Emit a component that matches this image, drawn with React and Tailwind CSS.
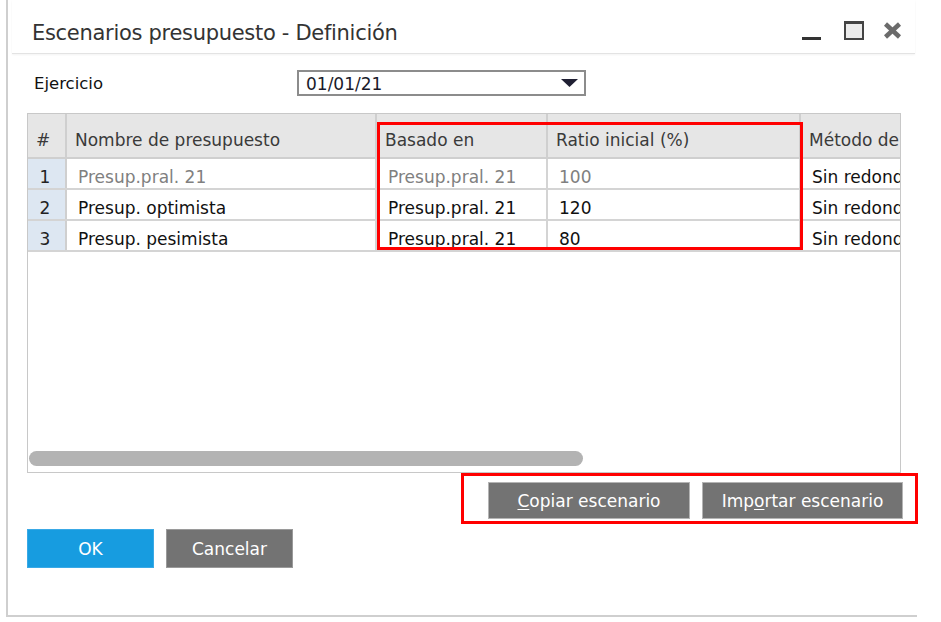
import React from "react";

const columns = [
  { key: "num", label: "#", width: "w-[39px]" },
  { key: "name", label: "Nombre de presupuesto", width: "w-[310px]" },
  { key: "base", label: "Basado en", width: "w-[171px]" },
  { key: "ratio", label: "Ratio inicial (%)", width: "w-[253px]" },
  { key: "method", label: "Método de redondeo", width: "w-[99px]" },
];

const rows = [
  { num: "1", name: "Presup.pral. 21", base: "Presup.pral. 21", ratio: "100", method: "Sin redondeo", muted: true },
  { num: "2", name: "Presup. optimista", base: "Presup.pral. 21", ratio: "120", method: "Sin redondeo" },
  { num: "3", name: "Presup. pesimista", base: "Presup.pral. 21", ratio: "80", method: "Sin redondeo" },
];

function WindowControls() {
  return (
    <div className="ml-auto mt-[2px] flex items-start pr-[13px]">
      {/* minimizar */}
      <div className="flex h-[19px] w-[19px] items-end">
        <div className="h-[3px] w-[19px] bg-[#333333]"></div>
      </div>
      {/* maximizar */}
      <div className="ml-[23px] h-[19px] w-[20px] border-2 border-t-[3px] border-[#444444] bg-[#ececec]"></div>
      {/* cerrar */}
      <svg className="ml-[19px] mt-[1px]" width="19" height="17" viewBox="0 0 19 17">
        <line x1="2.5" y1="2" x2="16.5" y2="15" stroke="#6b6b6b" strokeWidth="4.5" />
        <line x1="16.5" y1="2" x2="2.5" y2="15" stroke="#6b6b6b" strokeWidth="4.5" />
      </svg>
    </div>
  );
}

function GridTable() {
  return (
    <div className="ml-[19px] mt-[17px] flex h-[360px] w-[874px] flex-col border border-[#c8c8c8]">
      <div className="flex h-[45px] border-b-2 border-[#cfcfcf] bg-[#e6e6e6]">
        {columns.map((col, i) => (
          <div
            key={col.key}
            className={`${col.width} ${i < columns.length - 1 ? "border-r-2 border-[#cfcfcf]" : ""} flex shrink-0 items-center overflow-hidden whitespace-nowrap pl-[8px] pt-[10px] text-[#3a3a3a]`}
          >
            {col.label}
          </div>
        ))}
      </div>
      {rows.map((row) => (
        <div key={row.num} className="flex h-[31px] border-b-2 border-[#d4d4d4]">
          <div className="flex w-[39px] shrink-0 items-center justify-center border-r-2 border-[#cfcfcf] bg-[#dde7f2] pr-[3px] pt-[7px] text-[#222222]">
            {row.num}
          </div>
          {["name", "base", "ratio", "method"].map((key, i) => (
            <div
              key={key}
              className={`${columns[i + 1].width} ${i < 3 ? "border-r-2 border-[#d4d4d4]" : ""} ${row.muted && key !== "method" ? "text-[#808080]" : "text-[#111111]"} flex shrink-0 items-center overflow-hidden whitespace-nowrap pl-[11px] pt-[7px]`}
            >
              {row[key]}
            </div>
          ))}
        </div>
      ))}
      <div className="flex-1"></div>
      <div className="mb-[6px] ml-[1px] h-[15px] w-[554px] rounded-full bg-[#b3b3b3]"></div>
    </div>
  );
}

export default function App() {
  return (
    <div className="relative h-[622px] w-[941px] overflow-hidden bg-white font-['DejaVu_Sans',sans-serif] text-[17px] leading-none">
      <div className="ml-[6px] flex h-[617px] w-[911px] flex-col border-b-2 border-l-2 border-[#cfcfcf]">
        <div className="ml-[4px] mr-[2px] flex h-[54px] items-start border-b border-[#e3e3e3] pt-[19px] shadow-[0_1px_2px_rgba(0,0,0,0.05)]">
          <h1 className="pl-[20px] pt-[2px] text-[21px] leading-[24px] tracking-[-0.3px] text-[#333333]">
            Escenarios presupuesto - Definición
          </h1>
          <WindowControls />
        </div>

        <div className="mt-[16px] flex h-[26px] items-center pl-[26px]">
          <label className="w-[263px] pt-[2px] text-[16.5px] text-[#111111]">Ejercicio</label>
          <div className="flex h-[26px] w-[289px] items-center border-2 border-[#8c8c8c] pl-[7px] pr-[6px]">
            <span className="pt-[3px] text-[#1a1a2a]">01/01/21</span>
            <svg className="ml-auto" width="17" height="8" viewBox="0 0 17 8">
              <polygon points="0,0 17,0 8.5,8" fill="#1f1f33" />
            </svg>
          </div>
        </div>

        <GridTable />

        <div className="mt-[9px] flex h-[37px] justify-end gap-[12px] pr-[14px]">
          <button className="h-[37px] w-[202px] border border-[#b4b4b4] bg-[#737373] pt-[2px] text-white">
            <span className="underline underline-offset-2">C</span>opiar escenario
          </button>
          <button className="h-[37px] w-[201px] border border-[#b4b4b4] bg-[#737373] pt-[2px] text-white">
            Imp<span className="underline underline-offset-2">o</span>rtar escenario
          </button>
        </div>

        <div className="mt-[10px] flex h-[39px] gap-[12px] pl-[19px]">
          <button className="h-[39px] w-[127px] border border-[#3aa9e6] bg-[#179ce0] pt-[2px] text-white">OK</button>
          <button className="h-[39px] w-[127px] border border-[#9a9a9a] bg-[#737373] pt-[2px] text-white">Cancelar</button>
        </div>
      </div>

      {/* marcas rojas sobre la captura */}
      <div className="pointer-events-none absolute left-[377px] top-[122px] h-[128px] w-[426px] border-[3px] border-[#ff0000]"></div>
      <div className="pointer-events-none absolute left-[461px] top-[473px] h-[51px] w-[457px] border-[3px] border-[#ff0000]"></div>
    </div>
  );
}
